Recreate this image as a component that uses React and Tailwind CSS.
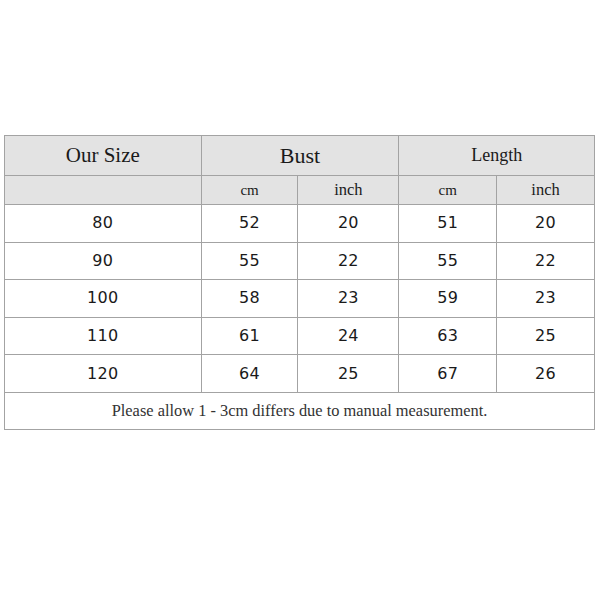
export default function App() {
  const rows = [
    ["80", "52", "20", "51", "20"],
    ["90", "55", "22", "55", "22"],
    ["100", "58", "23", "59", "23"],
    ["110", "61", "24", "63", "25"],
    ["120", "64", "25", "67", "26"],
  ];
  const b = "border border-[#a3a3a3] text-center p-0";
  return (
    <div className="w-[600px] h-[600px] bg-white pt-[135px] pl-[4px]">
      <table className="w-[591px] border-collapse text-[#1a1a1a]">
        <colgroup>
          <col className="w-[197px]" />
          <col className="w-[97px]" />
          <col className="w-[101px]" />
          <col className="w-[98px]" />
          <col className="w-[98px]" />
        </colgroup>
        <tbody>
          <tr className="h-[40px] bg-[#e3e3e3] font-['Liberation_Serif',serif]">
            <td className={`${b} text-[21px]`}>Our Size</td>
            <td colSpan={2} className={`${b} text-[22px]`}>Bust</td>
            <td colSpan={2} className={`${b} text-[18px]`}>Length</td>
          </tr>
          <tr className="h-[29px] bg-[#e3e3e3] font-['Liberation_Serif',serif]">
            <td className={b}></td>
            <td className={`${b} text-[15px]`}>cm</td>
            <td className={`${b} text-[16.5px]`}>inch</td>
            <td className={`${b} text-[15px]`}>cm</td>
            <td className={`${b} text-[16.5px]`}>inch</td>
          </tr>
          {rows.map((r, i) => (
            <tr key={i} className="h-[37.6px] font-['DejaVu_Sans',sans-serif]">
              {r.map((c, j) => (
                <td key={j} className={`${b} text-[16px] tracking-[0.02em]`}>{c}</td>
              ))}
            </tr>
          ))}
          <tr className="h-[37px] font-['Liberation_Serif',serif]">
            <td colSpan={5} className={`${b} text-[16.4px] text-[#333]`}>
              Please allow 1 - 3cm differs due to manual measurement.
            </td>
          </tr>
        </tbody>
      </table>
    </div>
  );
}
